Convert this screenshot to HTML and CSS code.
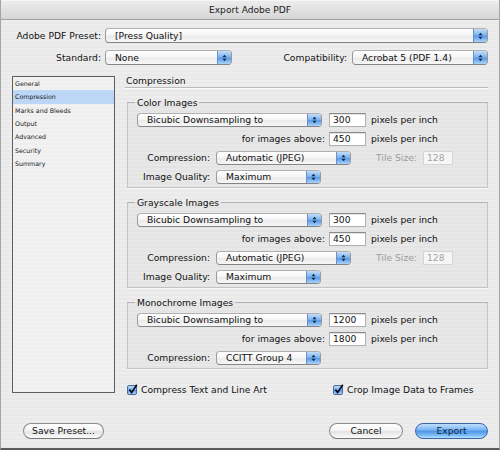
FILE: index.html
```html
<!DOCTYPE html>
<html>
<head>
<meta charset="utf-8">
<link rel="stylesheet" href="styles.css">
</head>
<body>
<div class="window">
  <div class="titlebar">Export Adobe PDF</div>
  <div class="content">
    <div class="toprow">
      <span class="toplabel">Adobe PDF Preset:</span>
      <div class="popup grow"><span class="ptext">[Press Quality]</span><span class="cap"><svg viewBox="0 0 14 12" width="14" height="12"><path d="M4.8 5.3 L7 2.4 L9.2 5.3 Z M4.8 6.7 L7 9.6 L9.2 6.7 Z" fill="#142848"/></svg></span></div>
    </div>
    <div class="toprow second">
      <span class="toplabel">Standard:</span>
      <div class="popup w-std"><span class="ptext">None</span><span class="cap"><svg viewBox="0 0 14 12" width="14" height="12"><path d="M4.8 5.3 L7 2.4 L9.2 5.3 Z M4.8 6.7 L7 9.6 L9.2 6.7 Z" fill="#142848"/></svg></span></div>
      <span class="spacer"></span>
      <span class="compatlabel">Compatibility:</span>
      <div class="popup w-compat"><span class="ptext">Acrobat 5 (PDF 1.4)</span><span class="cap"><svg viewBox="0 0 14 12" width="14" height="12"><path d="M4.8 5.3 L7 2.4 L9.2 5.3 Z M4.8 6.7 L7 9.6 L9.2 6.7 Z" fill="#142848"/></svg></span></div>
    </div>

    <div class="main">
      <ul class="sidebar">
        <li>General</li>
        <li class="selected">Compression</li>
        <li>Marks and Bleeds</li>
        <li>Output</li>
        <li>Advanced</li>
        <li>Security</li>
        <li>Summary</li>
      </ul>

      <div class="panel">
        <div class="heading">Compression</div>

        <fieldset class="group">
          <legend>Color Images</legend>
          <div class="grow-row">
            <div class="popup w-sample"><span class="ptext">Bicubic Downsampling to</span><span class="cap"><svg viewBox="0 0 14 12" width="14" height="12"><path d="M4.8 5.3 L7 2.4 L9.2 5.3 Z M4.8 6.7 L7 9.6 L9.2 6.7 Z" fill="#142848"/></svg></span></div>
            <span class="field">300</span>
            <span class="unit">pixels per inch</span>
          </div>
          <div class="grow-row">
            <span class="abovelabel">for images above:</span>
            <span class="field">450</span>
            <span class="unit">pixels per inch</span>
          </div>
          <div class="grow-row">
            <span class="glabel">Compression:</span>
            <div class="popup w-comp"><span class="ptext">Automatic (JPEG)</span><span class="cap"><svg viewBox="0 0 14 12" width="14" height="12"><path d="M4.8 5.3 L7 2.4 L9.2 5.3 Z M4.8 6.7 L7 9.6 L9.2 6.7 Z" fill="#142848"/></svg></span></div>
            <span class="tilelabel">Tile Size:</span>
            <span class="field disabled">128</span>
          </div>
          <div class="grow-row">
            <span class="glabel">Image Quality:</span>
            <div class="popup w-qual"><span class="ptext">Maximum</span><span class="cap"><svg viewBox="0 0 14 12" width="14" height="12"><path d="M4.8 5.3 L7 2.4 L9.2 5.3 Z M4.8 6.7 L7 9.6 L9.2 6.7 Z" fill="#142848"/></svg></span></div>
          </div>
        </fieldset>

        <fieldset class="group">
          <legend>Grayscale Images</legend>
          <div class="grow-row">
            <div class="popup w-sample"><span class="ptext">Bicubic Downsampling to</span><span class="cap"><svg viewBox="0 0 14 12" width="14" height="12"><path d="M4.8 5.3 L7 2.4 L9.2 5.3 Z M4.8 6.7 L7 9.6 L9.2 6.7 Z" fill="#142848"/></svg></span></div>
            <span class="field">300</span>
            <span class="unit">pixels per inch</span>
          </div>
          <div class="grow-row">
            <span class="abovelabel">for images above:</span>
            <span class="field">450</span>
            <span class="unit">pixels per inch</span>
          </div>
          <div class="grow-row">
            <span class="glabel">Compression:</span>
            <div class="popup w-comp"><span class="ptext">Automatic (JPEG)</span><span class="cap"><svg viewBox="0 0 14 12" width="14" height="12"><path d="M4.8 5.3 L7 2.4 L9.2 5.3 Z M4.8 6.7 L7 9.6 L9.2 6.7 Z" fill="#142848"/></svg></span></div>
            <span class="tilelabel">Tile Size:</span>
            <span class="field disabled">128</span>
          </div>
          <div class="grow-row">
            <span class="glabel">Image Quality:</span>
            <div class="popup w-qual"><span class="ptext">Maximum</span><span class="cap"><svg viewBox="0 0 14 12" width="14" height="12"><path d="M4.8 5.3 L7 2.4 L9.2 5.3 Z M4.8 6.7 L7 9.6 L9.2 6.7 Z" fill="#142848"/></svg></span></div>
          </div>
        </fieldset>

        <fieldset class="group">
          <legend>Monochrome Images</legend>
          <div class="grow-row">
            <div class="popup w-sample"><span class="ptext">Bicubic Downsampling to</span><span class="cap"><svg viewBox="0 0 14 12" width="14" height="12"><path d="M4.8 5.3 L7 2.4 L9.2 5.3 Z M4.8 6.7 L7 9.6 L9.2 6.7 Z" fill="#142848"/></svg></span></div>
            <span class="field">1200</span>
            <span class="unit">pixels per inch</span>
          </div>
          <div class="grow-row">
            <span class="abovelabel">for images above:</span>
            <span class="field">1800</span>
            <span class="unit">pixels per inch</span>
          </div>
          <div class="grow-row">
            <span class="glabel">Compression:</span>
            <div class="popup w-qual"><span class="ptext">CCITT Group 4</span><span class="cap"><svg viewBox="0 0 14 12" width="14" height="12"><path d="M4.8 5.3 L7 2.4 L9.2 5.3 Z M4.8 6.7 L7 9.6 L9.2 6.7 Z" fill="#142848"/></svg></span></div>
          </div>
        </fieldset>

        <div class="checks">
          <span class="check first"><svg class="box" viewBox="0 0 11 11" width="11" height="11"><defs><linearGradient id="cg" x1="0" y1="0" x2="0" y2="1"><stop offset="0" stop-color="#c6e0fb"/><stop offset="0.5" stop-color="#74aef0"/><stop offset="0.55" stop-color="#5b9ae8"/><stop offset="1" stop-color="#b3dafc"/></linearGradient></defs><rect x="0.5" y="1.5" width="9" height="9" rx="1.5" fill="url(#cg)" stroke="#4a6a9c"/><path d="M2.4 5.6 L4.6 8.6 L9.8 0.8" fill="none" stroke="#0a0a14" stroke-width="1.7"/></svg>Compress Text and Line Art</span>
          <span class="check"><svg class="box" viewBox="0 0 11 11" width="11" height="11"><rect x="0.5" y="1.5" width="9" height="9" rx="1.5" fill="url(#cg)" stroke="#4a6a9c"/><path d="M2.4 5.6 L4.6 8.6 L9.8 0.8" fill="none" stroke="#0a0a14" stroke-width="1.7"/></svg>Crop Image Data to Frames</span>
        </div>
      </div>
    </div>

    <div class="buttons">
      <span class="btn save">Save Preset...</span>
      <span class="spacer"></span>
      <span class="btn cancel">Cancel</span>
      <span class="btn export">Export</span>
    </div>
  </div>
</div>
</body>
</html>
```
FILE: styles.css
```css
* { box-sizing: border-box; }
html, body { margin: 0; padding: 0; }
body {
  width: 500px;
  height: 450px;
  overflow: hidden;
  font-family: "DejaVu Sans", "Liberation Sans", sans-serif;
  font-size: 9.2px;
  color: #111;
}
.window {
  width: 500px;
  height: 450px;
  border-left: 1px solid #a4a4a4;
  border-right: 1px solid #a4a4a4;
  border-bottom: 2px solid #5c5c5c;
  background: repeating-linear-gradient(to bottom, #ededed 0, #ededed 2px, #e9e9e9 2px, #e9e9e9 4px);
}
.titlebar {
  height: 20px;
  line-height: 18px;
  text-align: center;
  font-size: 9.1px;
  color: #1a1a1a;
  background: linear-gradient(#ececec, #d6d6d6);
  border-bottom: 1px solid #a2a2a2;
  border-top: 1px solid #f6f6f6;
}
.content {
  padding: 8px 11px 0 11px;
}
.toprow {
  display: flex;
  align-items: center;
  height: 15px;
}
.toprow.second { margin-top: 7px; }
.toplabel {
  width: 89px;
  text-align: right;
  margin-right: 4px;
  flex: none;
}
.compatlabel { margin-right: 5px; }
.spacer { flex: 1; }
.popup {
  display: flex;
  align-items: stretch;
  height: 15px;
  border: 1px solid #9a9a9a;
  border-top-color: #b0b0b0;
  border-bottom-color: #848484;
  border-radius: 4px;
  background: linear-gradient(#ffffff, #f6f6f6 45%, #ebebeb 55%, #f7f7f7);
  flex: none;
  overflow: hidden;
}
.popup .ptext {
  flex: 1;
  padding-left: 9px;
  line-height: 13px;
  white-space: nowrap;
  color: #111;
}
.popup .cap {
  width: 14px;
  flex: none;
  border-left: 1px solid #6a8fc4;
  background: linear-gradient(#c4def9, #7eb4f0 45%, #5a9ae6 55%, #a9d3fb);
  display: flex;
  align-items: center;
  justify-content: center;
}
.popup .cap svg { display: block; }
.popup.grow { flex: 1; }
.w-std { width: 127px; }
.w-compat { width: 136px; }

.main {
  display: flex;
  margin-top: 11px;
}
.sidebar {
  list-style: none;
  margin: 0;
  padding: 0;
  width: 103px;
  height: 317px;
  flex: none;
  border: 1px solid #5e5e5e;
  background: repeating-linear-gradient(to bottom, #f2f2f2 0, #f2f2f2 2px, #eeeeee 2px, #eeeeee 4px);
  font-size: 6.3px;
}
.sidebar li {
  height: 13.33px;
  line-height: 13.33px;
  padding-left: 2px;
  color: #1a1a1a;
}
.sidebar li.selected { background: #bcd6f6; }

.panel {
  flex: 1;
  margin-left: 10px;
}
.heading {
  line-height: 10px;
  padding: 0 0 1px 1px;
  border-bottom: 1px solid #bcbcbc;
  box-shadow: 0 1px 0 #fafafa;
}
.group {
  margin: 9px 0 0 2px;
  padding: 2px 9px 1px 9px;
  border: 1px solid #c4c4c4;
  border-top-color: #b4b4b4;
  background: rgba(0, 0, 0, 0.02);
  box-shadow: 0 1px 0 #f8f8f8;
  min-width: 0;
}
.group legend {
  padding: 0 2px;
  margin-left: -2px;
  line-height: 11px;
  color: #111;
}
.grow-row {
  display: flex;
  align-items: center;
  height: 19px;
}
.w-sample { width: 185px; }
.w-comp { width: 135px; }
.w-qual { width: 105px; }
.popup.w-sample, .popup.w-comp, .popup.w-qual { height: 14px; }
.popup.w-sample .ptext, .popup.w-comp .ptext, .popup.w-qual .ptext { line-height: 12px; }
.field {
  display: block;
  width: 37px;
  height: 14px;
  margin-left: 7px;
  padding-left: 3px;
  line-height: 12px;
  background: #fff;
  border: 1px solid #b0b0b0;
  border-top-color: #8a8a8a;
  box-shadow: inset 0 1px 0 #e2e2e2;
  flex: none;
}
.unit { margin-left: 5px; }
.abovelabel {
  width: 188px;
  text-align: right;
  margin-right: -3px;
  flex: none;
}
.glabel {
  width: 73px;
  text-align: right;
  margin-right: 6px;
  flex: none;
}
.tilelabel {
  margin-left: 25px;
  color: #9c9c9c;
}
.field.disabled {
  width: 30px;
  margin-left: 6px;
  color: #a4a4a4;
  background: #f6f6f6;
  border-color: #d4d4d4;
  box-shadow: none;
}

.checks {
  display: flex;
  align-items: center;
  height: 18px;
  margin-top: 11px;
}
.check {
  display: flex;
  align-items: center;
}
.check.first {
  width: 206px;
  margin-left: 2px;
}
.check .box {
  display: block;
  margin-right: 3px;
  flex: none;
}

.buttons {
  display: flex;
  align-items: center;
  margin-top: 25px;
  height: 16px;
}
.btn {
  display: block;
  height: 16px;
  line-height: 14px;
  text-align: center;
  border-radius: 8px;
  border: 1px solid #8c8c8c;
  border-bottom-color: #777;
  background: linear-gradient(#ffffff, #f5f5f5 45%, #e4e4e4 55%, #fbfbfb);
  color: #111;
}
.save { width: 81px; margin-left: 11px; }
.cancel { width: 74px; }
.export {
  width: 73px;
  margin-left: 12px;
  border-color: #3d66a6;
  background: linear-gradient(#c0defb, #7db8f4 40%, #4f96e8 52%, #79bcf8 80%, #b6e1ff);
  color: #0e1f3e;
}
```
